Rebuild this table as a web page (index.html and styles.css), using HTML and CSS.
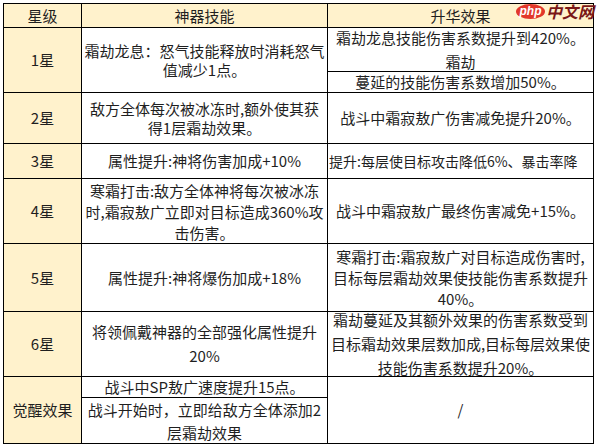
FILE: index.html
```html
<!DOCTYPE html>
<html lang="zh-CN">
<head>
<meta charset="utf-8">
<title>神器升华</title>
<link rel="stylesheet" href="styles.css">
</head>
<body>
<div class="sheet">
  <div class="grid">
    <div class="c hd">星级</div>
    <div class="c hd">神器技能</div>
    <div class="c hd">升华效果</div>

    <div class="c star r2">1星</div>
    <div class="c r2 lh19">霜劫龙息：怒气技能释放时消耗怒气<br>值减少1点。</div>
    <div class="c lh24">霜劫龙息技能伤害系数提升到420%。<br>霜劫</div>
    <div class="c">蔓延的技能伤害系数增加50%。</div>

    <div class="c star">2星</div>
    <div class="c lh19">敌方全体每次被冰冻时,额外使其获<br>得1层霜劫效果。</div>
    <div class="c">战斗中霜寂敖广伤害减免提升20%。</div>

    <div class="c star">3星</div>
    <div class="c">属性提升:神将伤害加成+10%</div>
    <div class="c clip">提升:每层使目标攻击降低6%、暴击率降</div>

    <div class="c star">4星</div>
    <div class="c lh21">寒霜打击:敌方全体神将每次被冰冻<br>时,霜寂敖广立即对目标造成360%攻<br>击伤害。</div>
    <div class="c">战斗中霜寂敖广最终伤害减免+15%。</div>

    <div class="c star">5星</div>
    <div class="c">属性提升:神将爆伤加成+18%</div>
    <div class="c lh21">寒霜打击:霜寂敖广对目标造成伤害时,<br>目标每层霜劫效果使技能伤害系数提升<br>40%。</div>

    <div class="c star">6星</div>
    <div class="c lh24">将领佩戴神器的全部强化属性提升<br>20%</div>
    <div class="c lh24">霜劫蔓延及其额外效果的伤害系数受到<br>目标霜劫效果层数加成,目标每层效果使<br>技能伤害系数提升20%。</div>

    <div class="c star r2">觉醒效果</div>
    <div class="c">战斗中SP敖广速度提升15点。</div>
    <div class="c r2">/</div>
    <div class="c lh23">战斗开始时，立即给敌方全体添加2<br>层霜劫效果</div>
  </div>
  <div class="mark"><span class="php">php</span><span class="cn">中文网</span></div>
</div>
</body>
</html>
```

FILE: styles.css
```css
html, body {
  margin: 0;
  padding: 0;
  background: #ffffff;
}

body {
  font-family: "Noto Sans CJK SC", "Noto Sans", sans-serif;
  font-size: 15px;
  color: #1f1f1f;
}

.sheet {
  position: relative;
  width: 598px;
  height: 446px;
  padding: 3px 0 0 3px;
  box-sizing: border-box;
}

.grid {
  display: grid;
  grid-template-columns: 77px 245px 265px;
  grid-template-rows: 23px 43px 20px 50px 34px 64px 67px 64px 20px 45px;
  gap: 1px;
  padding: 1px;
  background: #000000;
  width: max-content;
}

.c {
  background: #ffffff;
  display: flex;
  align-items: center;
  justify-content: center;
  text-align: center;
  white-space: nowrap;
  line-height: 18px;
  min-width: 0;
  min-height: 0;
}

.hd, .star {
  background: #fff2cc;
}

.r2 {
  grid-row: span 2;
}

.lh19 { line-height: 19px; }
.lh21 { line-height: 21px; }
.lh23 { line-height: 23px; }
.lh24 { line-height: 24px; }

.clip {
  overflow: hidden;
  justify-content: flex-start;
  font-size: 14px;
  padding-left: 1px;
}

.mark {
  position: absolute;
  left: 516px;
  top: 3px;
  display: flex;
  align-items: center;
  gap: 1px;
}

.php {
  display: flex;
  align-items: center;
  justify-content: center;
  width: 29px;
  height: 15px;
  border-radius: 50%;
  background: #e2372b;
  color: #ffffff;
  font-family: "Liberation Sans", sans-serif;
  font-style: italic;
  font-weight: bold;
  font-size: 12px;
  line-height: 15px;
}

.cn {
  font-family: "Noto Sans CJK SC", sans-serif;
  font-style: italic;
  font-weight: bold;
  font-size: 16px;
  line-height: 16px;
  color: #7a1717;
}
```
